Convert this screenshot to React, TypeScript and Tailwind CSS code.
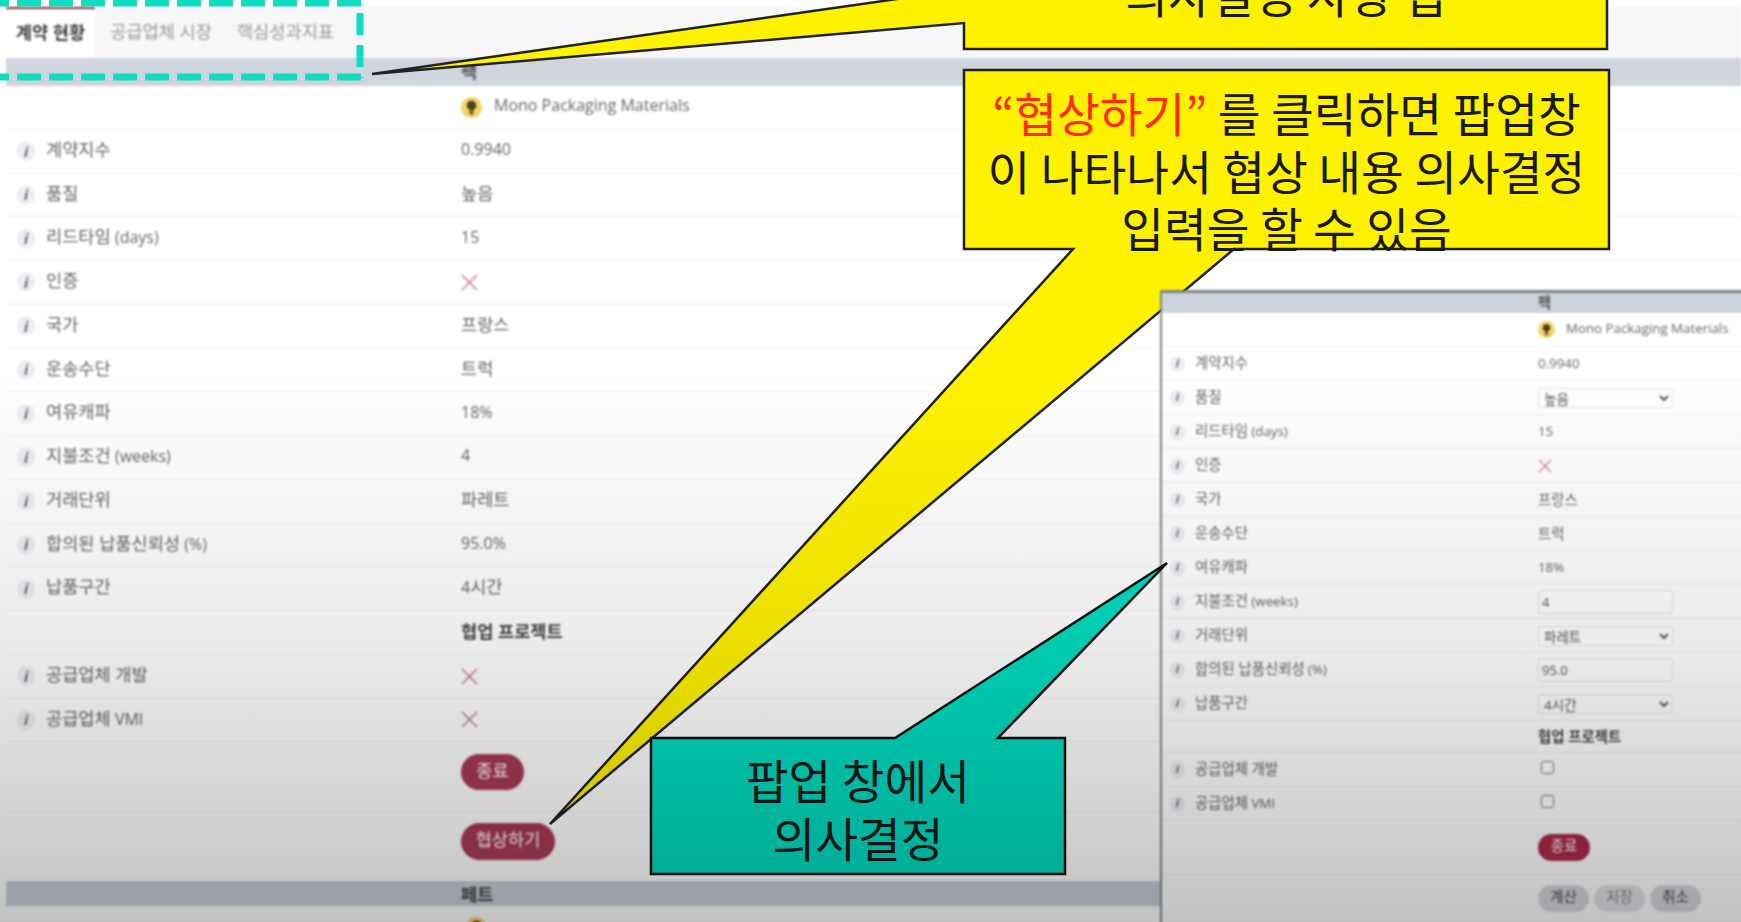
import React from "react";

type Kind =
  | { t: "text"; v: string }
  | { t: "x" }
  | { t: "select"; v: string }
  | { t: "input"; v: string }
  | { t: "check" };

type Row = { label: string; main: Kind; popup: Kind };

const rows: Row[] = [
  { label: "계약지수", main: { t: "text", v: "0.9940" }, popup: { t: "text", v: "0.9940" } },
  { label: "품질", main: { t: "text", v: "높음" }, popup: { t: "select", v: "높음" } },
  { label: "리드타임 (days)", main: { t: "text", v: "15" }, popup: { t: "text", v: "15" } },
  { label: "인증", main: { t: "x" }, popup: { t: "x" } },
  { label: "국가", main: { t: "text", v: "프랑스" }, popup: { t: "text", v: "프랑스" } },
  { label: "운송수단", main: { t: "text", v: "트럭" }, popup: { t: "text", v: "트럭" } },
  { label: "여유캐파", main: { t: "text", v: "18%" }, popup: { t: "text", v: "18%" } },
  { label: "지불조건 (weeks)", main: { t: "text", v: "4" }, popup: { t: "input", v: "4" } },
  { label: "거래단위", main: { t: "text", v: "파레트" }, popup: { t: "select", v: "파레트" } },
  { label: "합의된 납품신뢰성 (%)", main: { t: "text", v: "95.0%" }, popup: { t: "input", v: "95.0" } },
  { label: "납품구간", main: { t: "text", v: "4시간" }, popup: { t: "select", v: "4시간" } },
];

const collab: Row[] = [
  { label: "공급업체 개발", main: { t: "x" }, popup: { t: "check" } },
  { label: "공급업체 VMI", main: { t: "x" }, popup: { t: "check" } },
];

// The Korean glyphs in the reference run larger than the Latin ones, so Hangul runs get their own size.
function Txt({ v, small }: { v: string; small?: boolean }) {
  const parts = v.split(/([가-힣]+(?: [가-힣]+)*)/).filter(Boolean);
  return (
    <span>
      {parts.map((p, i) =>
        /[가-힣]/.test(p) ? (
          <span key={i} className={small ? "text-[14.4px]" : "text-[17.6px]"}>
            {p}
          </span>
        ) : (
          <span key={i}>{p}</span>
        )
      )}
    </span>
  );
}

function Bulb({ small }: { small?: boolean }) {
  return (
    <svg viewBox="0 0 20 20" className={small ? "h-[17px] w-[17px] shrink-0" : "h-[21px] w-[21px] shrink-0"}>
      <circle cx="10" cy="10" r="10" fill="#f6d365" />
      <path d="M10 3.6a4.4 4.4 0 0 0-2.6 8c.5.4.8.9.8 1.5h3.6c0-.6.3-1.1.8-1.5a4.4 4.4 0 0 0-2.6-8z" fill="#4a3f1e" />
      <rect x="8.2" y="13.8" width="3.6" height="2.6" rx="0.8" fill="#4a3f1e" />
    </svg>
  );
}

function Cross({ small }: { small?: boolean }) {
  return (
    <svg viewBox="0 0 16 16" className={small ? "h-[14px] w-[14px]" : "h-[17px] w-[17px]"} fill="none" stroke="#c4748c" strokeWidth="1.4">
      <path d="M1 1l14 14M15 1L1 15" />
    </svg>
  );
}

function Info({ small }: { small?: boolean }) {
  return (
    <span
      className={
        small
          ? "flex h-[16px] w-[15px] shrink-0 items-center justify-center rounded-full bg-[#eceef3] text-[11px] font-bold italic text-[#666]"
          : "flex h-[20px] w-[18px] shrink-0 items-center justify-center rounded-full bg-[#eceef3] text-[14px] font-bold italic text-[#666]"
      }
    >
      i
    </span>
  );
}

function MainValue({ k }: { k: Kind }) {
  if (k.t === "x") return <Cross />;
  if (k.t === "text")
    return (
      <span className="-translate-y-[2px]">
        <Txt v={k.v} />
      </span>
    );
  return null;
}

function PopupValue({ k }: { k: Kind }) {
  if (k.t === "x") return <Cross small />;
  if (k.t === "text") return <Txt v={k.v} small />;
  if (k.t === "select")
    return (
      <select defaultValue={k.v} className="h-[20px] w-[135px] rounded-[2px] border border-[#e4e4e4] bg-white px-[1px] text-[13.5px] text-[#555]">
        <option>{k.v}</option>
      </select>
    );
  if (k.t === "input")
    return <input defaultValue={k.v} readOnly className="h-[24px] w-[135px] rounded-[2px] border border-[#e4e4e4] bg-white px-[3px] text-[13px] text-[#555]" />;
  return <input type="checkbox" className="mb-[4px] ml-[3px] h-[13px] w-[13px]" />;
}

function MainRow({ r }: { r: Row }) {
  return (
    <div className="flex h-[43.75px] items-center border-b border-[#f1f1f1]">
      <div className="flex w-[455px] shrink-0 items-center gap-[11px] pl-[11px] text-[#666]">
        <Info />
        <span className="-translate-y-[2px]">
          <Txt v={r.label} />
        </span>
      </div>
      <MainValue k={r.main} />
    </div>
  );
}

function PopupRow({ r }: { r: Row }) {
  return (
    <div className="flex h-[34px] items-center border-b border-[#f1f1f1]">
      <div className="flex w-[376px] shrink-0 items-center gap-[10px] pl-[8px] text-[#666]">
        <Info small />
        <span className="-translate-y-[1px]">
          <Txt v={r.label} small />
        </span>
      </div>
      <PopupValue k={r.popup} />
    </div>
  );
}

function Popup() {
  return (
    <div className="absolute left-[1160px] top-[290px] h-[640px] w-[590px] border-l-2 border-t-[3px] border-[#7b8088] bg-white text-[13.3px] text-[#666] blur-[1px]">
      <div className="flex h-[20px] items-center bg-[#cdd3dc]">
        <div className="w-[376px] shrink-0" />
        <span className="font-bold text-[#555]">
          <Txt v="팩" small />
        </span>
      </div>
      <div className="flex h-[34px] items-center border-b border-[#f1f1f1]">
        <div className="w-[376px] shrink-0" />
        <div className="flex items-center gap-[11px]">
          <Bulb small />
          <span className="-translate-y-[1px]">Mono Packaging Materials</span>
        </div>
      </div>
      {rows.map((r) => (
        <PopupRow key={r.label} r={r} />
      ))}
      <div className="flex h-[32px] items-center border-b border-[#f1f1f1]">
        <div className="w-[376px] shrink-0" />
        <span className="font-bold text-[#444]">
          <Txt v="협업 프로젝트" small />
        </span>
      </div>
      {collab.map((r) => (
        <PopupRow key={r.label} r={r} />
      ))}
      <div className="flex h-[54px] items-center border-b border-[#f1f1f1] pl-[376px]">
        <button className="flex h-[27px] w-[52px] items-center justify-center rounded-full bg-[#ac2a4a] pb-[3px] text-white">
          <Txt v="종료" small />
        </button>
      </div>
      <div className="flex gap-[5px] pl-[376px] pt-[10px]">
        <button className="h-[27px] w-[51px] rounded-full bg-[#d6d8dd] pb-[3px] text-[#444]">
          <Txt v="계산" small />
        </button>
        <button className="h-[27px] w-[51px] rounded-full bg-[#e0e2e6] pb-[3px] text-[#888]">
          <Txt v="저장" small />
        </button>
        <button className="h-[27px] w-[51px] rounded-full bg-[#d6d8dd] pb-[3px] text-[#444]">
          <Txt v="취소" small />
        </button>
      </div>
    </div>
  );
}

function MainPanel() {
  return (
    <div className="h-[922px] bg-white pl-[6px] pt-[7px] text-[16px] text-[#666] blur-[0.8px]">
      <div className="flex h-[51px] items-stretch bg-[#f7f7fa]">
        <div className="flex w-[89px] items-center justify-center border-t-2 border-[#7a2a3c] bg-white pb-[2px] font-bold text-[#3c3c3c]">
          <Txt v="계약 현황" />
        </div>
        <div className="flex w-[132px] items-center justify-center pb-[2px] text-[#9a9a9a]">
          <Txt v="공급업체 시장" />
        </div>
        <div className="flex w-[117px] items-center justify-center pb-[2px] text-[#9a9a9a]">
          <Txt v="핵심성과지표" />
        </div>
      </div>
      <div className="flex h-[28px] items-center bg-[#cfd4dd]">
        <div className="w-[455px] shrink-0" />
        <span className="-translate-y-[1px] font-bold text-[#555]">
          <Txt v="팩" />
        </span>
      </div>
      <div className="flex h-[43.75px] items-center border-b border-[#f1f1f1]">
        <div className="w-[455px] shrink-0" />
        <div className="flex items-center gap-[12px]">
          <Bulb />
          <span className="-translate-y-[2px]">Mono Packaging Materials</span>
        </div>
      </div>
      {rows.map((r) => (
        <MainRow key={r.label} r={r} />
      ))}
      <div className="flex h-[43.75px] items-center border-b border-[#f1f1f1]">
        <div className="w-[455px] shrink-0" />
        <span className="-translate-y-[1px] font-bold text-[#444]">
          <Txt v="협업 프로젝트" />
        </span>
      </div>
      {collab.map((r) => (
        <MainRow key={r.label} r={r} />
      ))}
      <div className="flex h-[70px] items-start border-b border-[#f1f1f1] pl-[455px] pt-[12px]">
        <button className="flex h-[36px] w-[63px] items-center justify-center rounded-full bg-[#a83a55] pb-[5px] text-white">
          <Txt v="종료" />
        </button>
      </div>
      <div className="flex h-[69px] items-start pl-[455px] pt-[11px]">
        <button className="flex h-[37px] w-[94px] items-center justify-center rounded-full bg-[#a83a55] pb-[5px] text-white">
          <Txt v="협상하기" />
        </button>
      </div>
      <div className="flex h-[25px] items-center bg-[#c8ced8]">
        <div className="w-[455px] shrink-0" />
        <span className="font-bold text-[#444]">
          <Txt v="페트" />
        </span>
      </div>
      <div className="pl-[460px] pt-[11px]">
        <Bulb />
      </div>
    </div>
  );
}

const calloutText =
  "absolute text-center text-[46.5px] font-normal leading-[57.5px] text-[#1a1a1a] [font-family:'Noto_Sans_CJK_KR',sans-serif]";

export default function App() {
  return (
    <div className="relative h-[922px] w-[1741px] overflow-hidden bg-white [font-family:'Open_Sans','Noto_Sans_CJK_KR',sans-serif]">
      <MainPanel />

      <svg className="absolute left-0 top-0 h-[922px] w-[1741px]" viewBox="0 0 1741 922">
        <polygon points="372,74 964,23 964,49 1607,49 1607,-6 932,-6" fill="#fff200" stroke="#222" strokeWidth="2.5" />
        <polygon points="964,70 1609,70 1609,249 1234,249 550,824 1073,249 964,249" fill="#fff200" stroke="#222" strokeWidth="2.5" />
        <g fill="none" stroke="#0fdcc0" strokeWidth="7">
          <path d="M-15 3H363" strokeDasharray="24 8" />
          <path d="M-15 77H363" strokeDasharray="24 8" />
          <path d="M360 13V78" strokeDasharray="22 10" />
        </g>
      </svg>
      <div className={calloutText + " left-[964px] top-[-36px] w-[643px]"}>의사결정 사항 탭</div>
      <div className={calloutText + " left-[964px] top-[83px] w-[645px]"}>
        <span className="text-[#ff2a10]">“협상하기”</span> 를 클릭하면 팝업창
        <br />이 나타나서 협상 내용 의사결정
        <br />입력을 할 수 있음
      </div>

      <Popup />

      <svg className="absolute left-0 top-0 h-[922px] w-[1741px]" viewBox="0 0 1741 922">
        <polygon points="651,738 895,738 1167,563 998,738 1065,738 1065,874 651,874" fill="#00dcc0" stroke="#111" strokeWidth="2.5" />
      </svg>
      <div className={calloutText + " left-[651px] top-[750px] w-[414px]"}>
        팝업 창에서
        <br />의사결정
      </div>

      <div className="pointer-events-none absolute inset-0 bg-[linear-gradient(to_bottom,rgba(0,0,0,0)_40%,rgba(0,0,0,0.08)_70%,rgba(0,0,0,0.24)_100%)]" />
    </div>
  );
}
